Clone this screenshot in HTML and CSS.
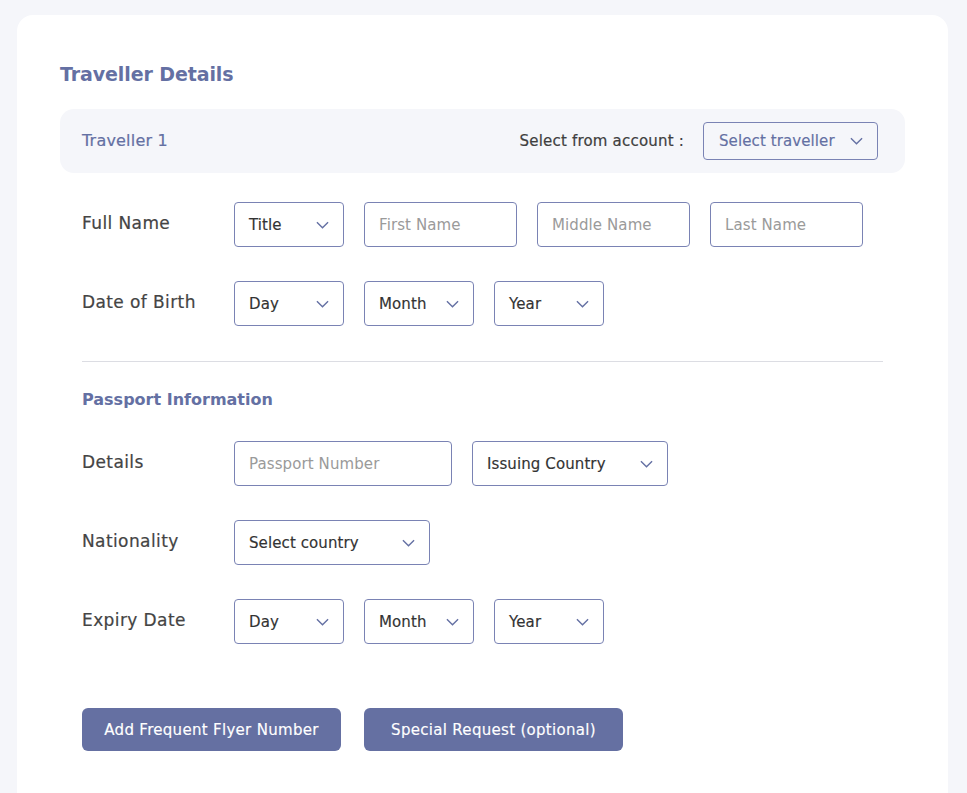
FILE: index.html
```html
<!DOCTYPE html>
<html>
<head>
<meta charset="utf-8">
<link rel="stylesheet" href="styles.css">
</head>
<body>
<div class="card">
  <h1 class="title">Traveller Details</h1>
  <div class="traveller-bar">
    <span class="traveller-name">Traveller 1</span>
    <div class="account">
      <span class="account-label">Select from account :</span>
      <div class="select select-traveller"><span>Select traveller</span><svg class="chev" viewBox="0 0 14 8"><path d="M1 1l6 6 6-6"/></svg></div>
    </div>
  </div>

  <div class="row">
    <div class="label">Full Name</div>
    <div class="fields">
      <div class="select w110"><span>Title</span><svg class="chev" viewBox="0 0 14 8"><path d="M1 1l6 6 6-6"/></svg></div>
      <div class="input w153">First Name</div>
      <div class="input w153">Middle Name</div>
      <div class="input w153">Last Name</div>
    </div>
  </div>
  <div class="row">
    <div class="label">Date of Birth</div>
    <div class="fields">
      <div class="select w110"><span>Day</span><svg class="chev" viewBox="0 0 14 8"><path d="M1 1l6 6 6-6"/></svg></div>
      <div class="select w110"><span>Month</span><svg class="chev" viewBox="0 0 14 8"><path d="M1 1l6 6 6-6"/></svg></div>
      <div class="select w110"><span>Year</span><svg class="chev" viewBox="0 0 14 8"><path d="M1 1l6 6 6-6"/></svg></div>
    </div>
  </div>

  <hr class="divider">

  <h2 class="subtitle">Passport Information</h2>
  <div class="row">
    <div class="label">Details</div>
    <div class="fields">
      <div class="input w218">Passport Number</div>
      <div class="select w196"><span>Issuing Country</span><svg class="chev" viewBox="0 0 14 8"><path d="M1 1l6 6 6-6"/></svg></div>
    </div>
  </div>
  <div class="row">
    <div class="label">Nationality</div>
    <div class="fields">
      <div class="select w196"><span>Select country</span><svg class="chev" viewBox="0 0 14 8"><path d="M1 1l6 6 6-6"/></svg></div>
    </div>
  </div>
  <div class="row">
    <div class="label">Expiry Date</div>
    <div class="fields">
      <div class="select w110"><span>Day</span><svg class="chev" viewBox="0 0 14 8"><path d="M1 1l6 6 6-6"/></svg></div>
      <div class="select w110"><span>Month</span><svg class="chev" viewBox="0 0 14 8"><path d="M1 1l6 6 6-6"/></svg></div>
      <div class="select w110"><span>Year</span><svg class="chev" viewBox="0 0 14 8"><path d="M1 1l6 6 6-6"/></svg></div>
    </div>
  </div>

  <div class="buttons">
    <button class="btn">Add Frequent Flyer Number</button>
    <button class="btn">Special Request (optional)</button>
  </div>
</div>
</body>
</html>
```

FILE: styles.css
```css
* { box-sizing: border-box; }
html, body { margin: 0; padding: 0; }
body {
  background: #f5f6fa;
  font-family: "DejaVu Sans", sans-serif;
  color: #444;
  padding: 15px 19px 0 17px;
  height: 793px;
  overflow: hidden;
}
.card {
  background: #fff;
  border-radius: 16px;
  padding: 51px 43px 60px 43px;
  min-height: 820px;
}
.title {
  margin: 0 0 27px 0;
  font-size: 19px;
  font-weight: bold;
  color: #6470a3;
  line-height: 16px;
  letter-spacing: -0.1px;
}
.traveller-bar {
  background: #f5f6fa;
  border-radius: 14px;
  height: 64px;
  display: flex;
  align-items: center;
  justify-content: space-between;
  padding: 0 27px 0 22px;
  margin-bottom: 29px;
}
.traveller-name {
  font-size: 16px;
  color: #6470a3;
  letter-spacing: 0.2px;
  margin-top: -2px;
  -webkit-text-stroke: 0.2px #6470a3;
}
.account { display: flex; align-items: center; gap: 19px; }
.account-label {
  font-size: 15px;
  color: #3f3f3f;
  letter-spacing: 0.2px;
  -webkit-text-stroke: 0.2px #3f3f3f;
}
.select-traveller {
  width: 175px;
  height: 38px !important;
  color: #6470a3 !important;
  padding: 0 14px 0 15px !important;
}
.row {
  display: flex;
  align-items: flex-start;
  padding-left: 22px;
  margin-bottom: 34px;
}
.label {
  width: 152px;
  font-size: 17px;
  color: #444;
  padding-top: 11px;
  letter-spacing: 0.4px;
  -webkit-text-stroke: 0.2px #444;
}
.fields { display: flex; gap: 20px; }
.select, .input {
  height: 45px;
  border: 1px solid #7a83b4;
  border-radius: 4px;
  display: flex;
  align-items: center;
  font-size: 15px;
  padding: 0 14px;
  letter-spacing: 0.1px;
}
.select { justify-content: space-between; color: #333; -webkit-text-stroke: 0.15px currentColor; }
.input { color: #9a9a9a; }
.chev {
  width: 13px;
  height: 8px;
  fill: none;
  stroke: #6470a3;
  stroke-width: 1.5;
  flex-shrink: 0;
}
.w110 { width: 110px; }
.w153 { width: 153px; }
.w196 { width: 196px; }
.w218 { width: 218px; }
.divider {
  border: 0;
  border-top: 1px solid #dcdde3;
  margin: 35px 22px 28px 22px;
}
.subtitle {
  margin: 0 0 31px 22px;
  font-size: 16px;
  font-weight: bold;
  color: #6470a3;
  letter-spacing: 0;
  line-height: 20px;
}
.buttons {
  display: flex;
  gap: 23px;
  padding-left: 22px;
  margin-top: 64px;
}
.btn {
  width: 259px;
  height: 43px;
  border: 0;
  border-radius: 6px;
  background: #6570a2;
  color: #fff;
  font-family: "DejaVu Sans", sans-serif;
  font-size: 15px;
  letter-spacing: 0.3px;
  -webkit-text-stroke: 0.15px #fff;
}
```
